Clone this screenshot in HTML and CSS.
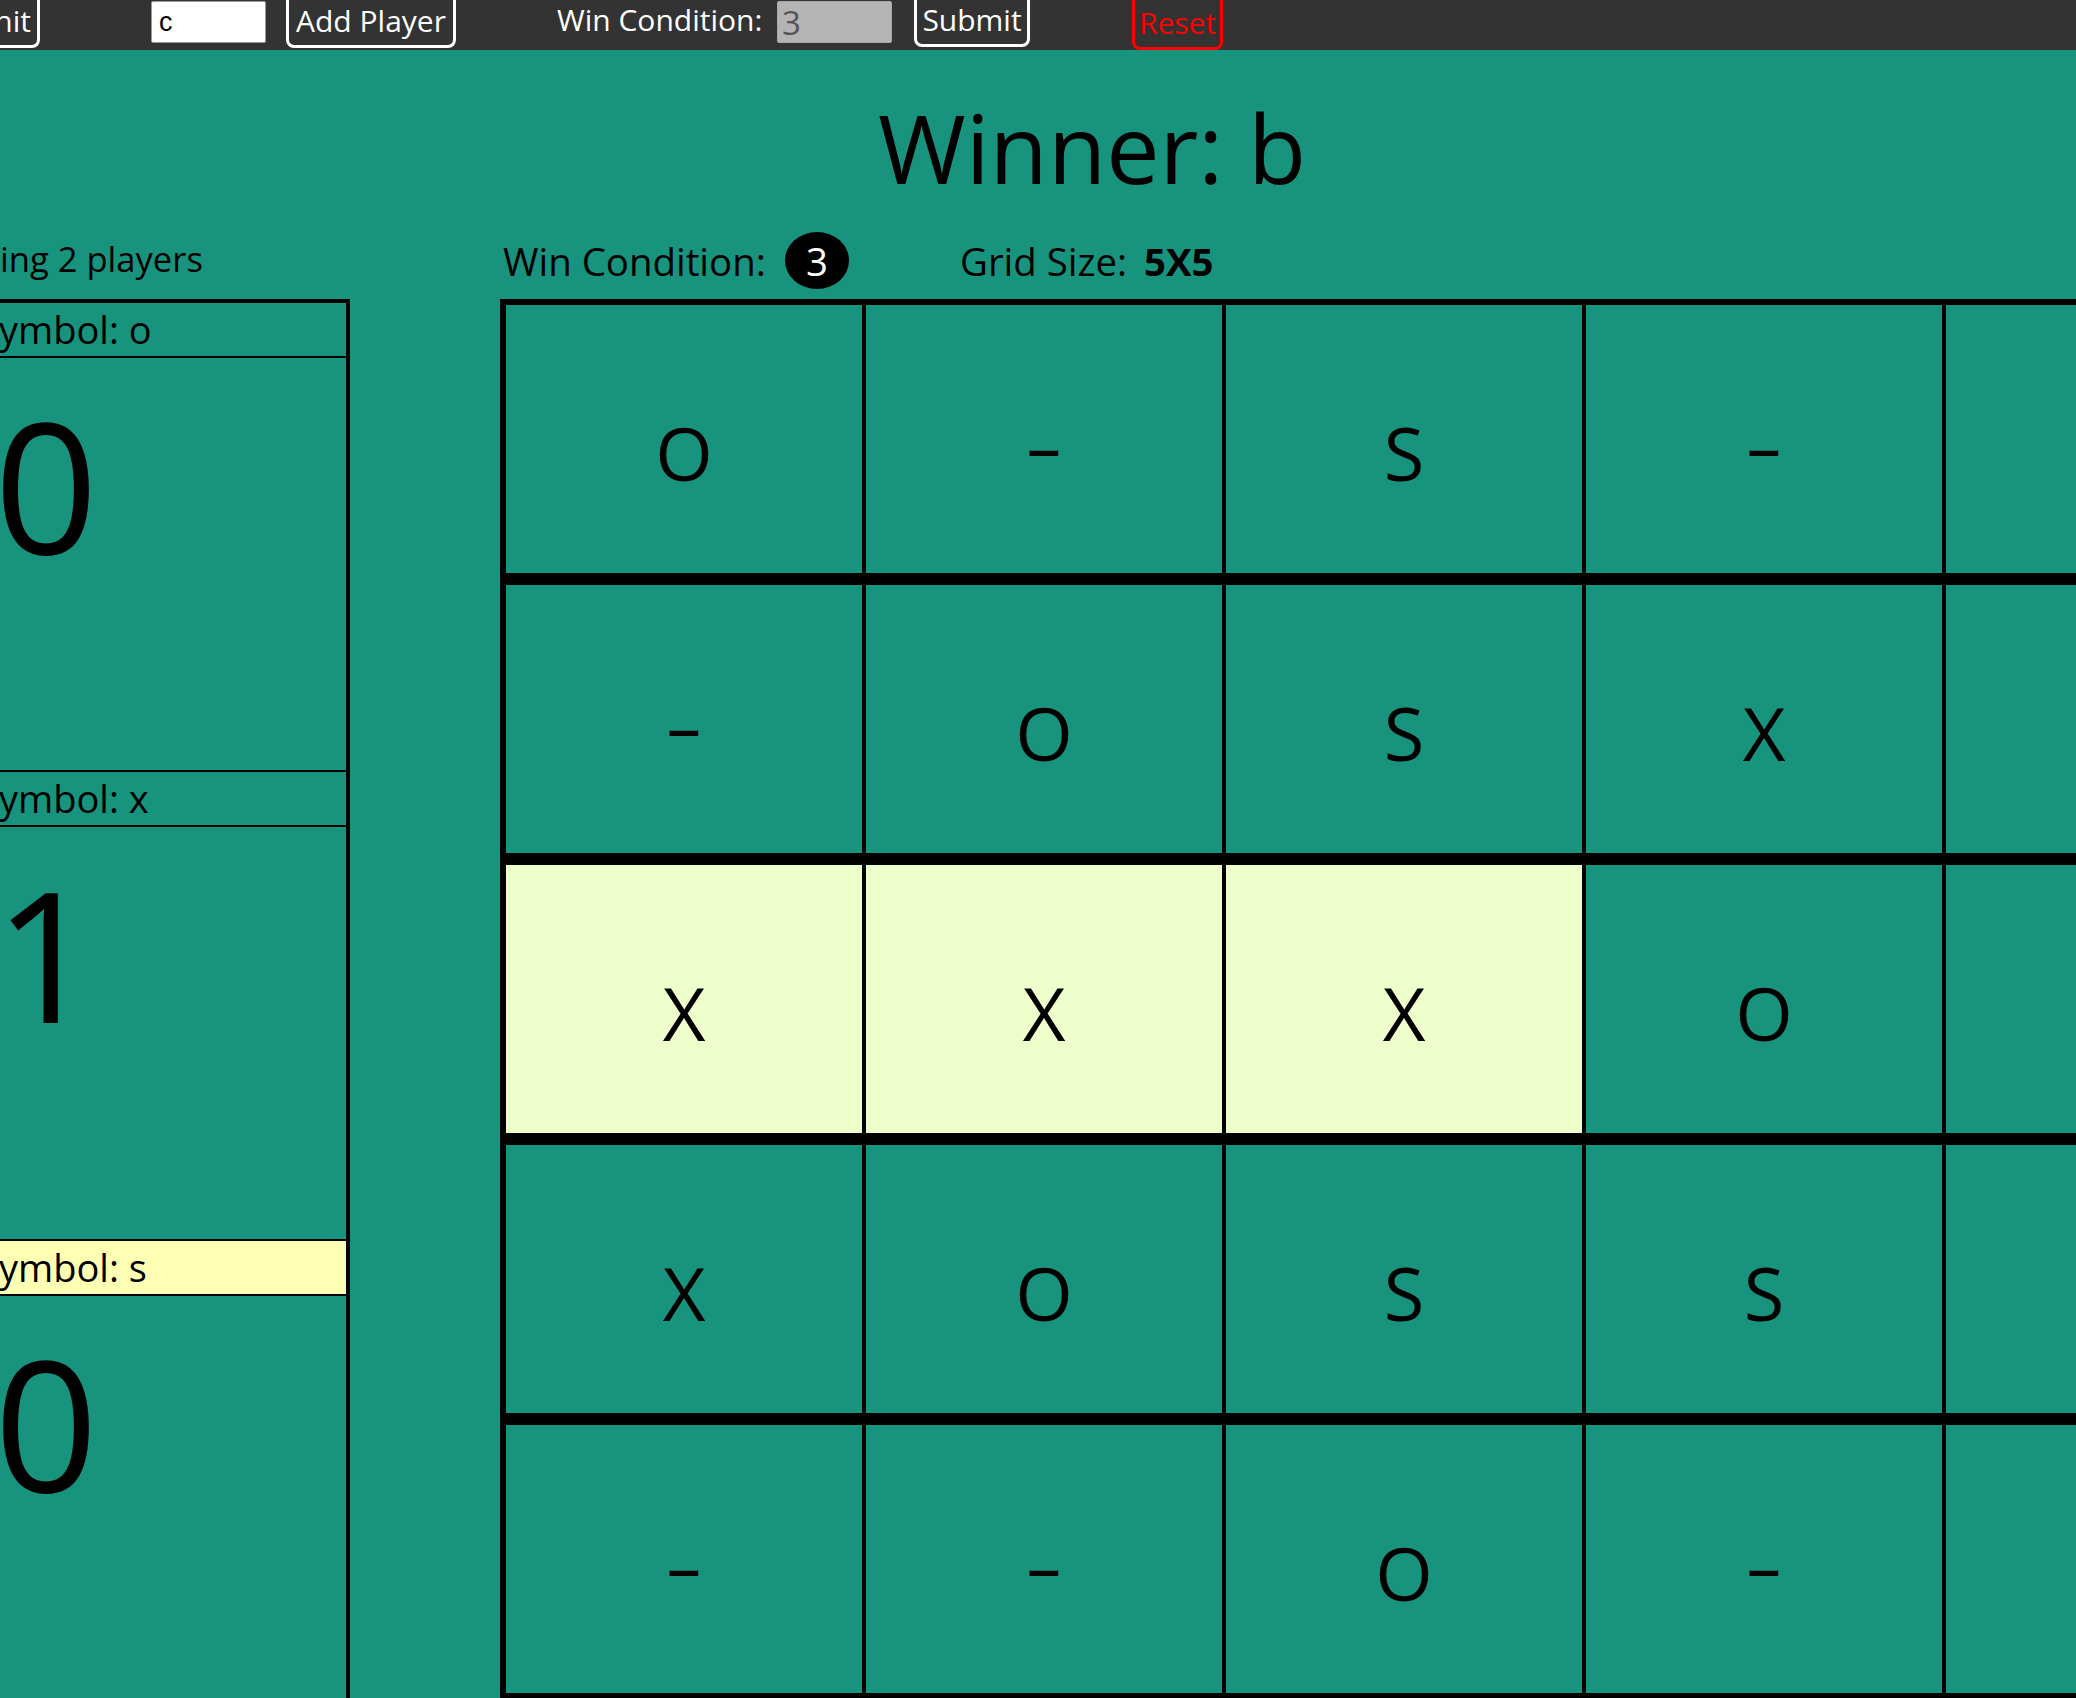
FILE: index.html
```html
<!DOCTYPE html>
<html lang="en">
<head>
<meta charset="utf-8">
<title>Tic Tac Toe</title>
<link rel="stylesheet" href="styles.css">
</head>
<body>
<div class="page">
  <header class="topbar">
    <button class="btn btn-cut">nit</button>
    <input class="name-input" type="text" value="c">
    <button class="btn btn-add">Add Player</button>
    <label class="bar-label">Win Condition:</label>
    <input class="win-input" type="text" value="3" disabled>
    <button class="btn btn-submit">Submit</button>
    <button class="btn btn-reset">Reset</button>
  </header>

  <h1 class="winner">Winner: b</h1>

  <main class="main">
    <aside class="side">
      <div class="side-title">ing 2 players</div>
      <div class="panel">
        <div class="player">
          <div class="player-head">ymbol: o</div>
          <div class="player-score">0</div>
        </div>
        <div class="player">
          <div class="player-head">ymbol: x</div>
          <div class="player-score">1</div>
        </div>
        <div class="player">
          <div class="player-head current">ymbol: s</div>
          <div class="player-score">0</div>
        </div>
      </div>
    </aside>

    <section class="board">
      <div class="info">
        <span class="info-label">Win Condition:</span>
        <span class="badge">3</span>
        <span class="info-grid">Grid Size:</span>
        <strong class="info-size">5X5</strong>
      </div>
      <div class="grid">
        <div class="cell">o</div>
        <div class="cell"><span class="dash">-</span></div>
        <div class="cell">s</div>
        <div class="cell"><span class="dash">-</span></div>
        <div class="cell"><span class="dash">-</span></div>

        <div class="cell"><span class="dash">-</span></div>
        <div class="cell">o</div>
        <div class="cell">s</div>
        <div class="cell">x</div>
        <div class="cell"><span class="dash">-</span></div>

        <div class="cell win">x</div>
        <div class="cell win">x</div>
        <div class="cell win">x</div>
        <div class="cell">o</div>
        <div class="cell"><span class="dash">-</span></div>

        <div class="cell">x</div>
        <div class="cell">o</div>
        <div class="cell">s</div>
        <div class="cell">s</div>
        <div class="cell"><span class="dash">-</span></div>

        <div class="cell"><span class="dash">-</span></div>
        <div class="cell"><span class="dash">-</span></div>
        <div class="cell">o</div>
        <div class="cell"><span class="dash">-</span></div>
        <div class="cell"><span class="dash">-</span></div>
      </div>
    </section>
  </main>
</div>
</body>
</html>
```

FILE: styles.css
```css
html, body {
  margin: 0;
  padding: 0;
  overflow: hidden;
}

body {
  background: #17937e;
  font-family: "Open Sans", "Noto Sans", sans-serif;
  color: #000;
}

.page {
  width: 2184px;
}

/* ---------- top bar ---------- */
.topbar {
  height: 50px;
  background: #333333;
  display: flex;
  align-items: flex-end;
}

.btn {
  box-sizing: border-box;
  flex: none;
  background: transparent;
  color: #fff;
  border: 3px solid #fff;
  border-radius: 8px;
  font-family: "Open Sans", "Noto Sans", sans-serif;
  font-size: 30px;
  line-height: 41px;
  padding: 6px 0 4px;
  text-align: center;
  margin-bottom: 2px;
}

.btn-cut {
  width: 70px;
  margin-left: -30px;
  text-align: right;
  padding-right: 6px;
}

.btn-add {
  width: 170px;
  margin-left: 20px;
}

.btn-submit {
  width: 116px;
  margin-left: 22px;
  margin-bottom: 3px;
}

.btn-reset {
  width: 91px;
  margin-left: 102px;
  margin-bottom: 0;
  border-color: #ff0000;
  color: #ff0000;
}

.name-input,
.win-input {
  box-sizing: border-box;
  flex: none;
  height: 42px;
  width: 115px;
  margin-bottom: 7px;
  border: 1px solid #9a9a9a;
  border-radius: 2px;
  padding: 0 6px;
  background: #fff;
  color: #000;
  font-family: "Liberation Sans", Arial, sans-serif;
  font-size: 27px;
}

.name-input {
  margin-left: 111px;
  padding-left: 7px;
}

.win-input {
  margin-left: 9px;
  background: #b4b4b4;
  border-color: #a8a8a8;
  color: #555;
  font-family: "Open Sans", "Noto Sans", sans-serif;
  font-size: 33px;
  padding-left: 4px;
}

.bar-label {
  flex: none;
  width: 211px;
  margin-left: 101px;
  margin-bottom: 10px;
  color: #fff;
  font-size: 30px;
  line-height: 40px;
  white-space: nowrap;
}

/* ---------- heading ---------- */
.winner {
  margin: 32px 0 0;
  font-size: 95px;
  font-weight: normal;
  line-height: 131px;
  text-align: center;
}

/* ---------- main ---------- */
.main {
  display: flex;
  align-items: flex-start;
}

.side {
  flex: none;
  width: 350px;
}

.side-title {
  margin: 23px 0 17px;
  font-size: 34.6px;
  line-height: 46px;
  white-space: nowrap;
}

.panel {
  box-sizing: border-box;
  width: 370px;
  margin-left: -20px;
  border: 4px solid #000;
  border-bottom: none;
}

.player + .player {
  border-top: 2px solid #000;
}

.player-head {
  height: 53px;
  line-height: 53px;
  font-size: 38px;
  padding-left: 15px;
  border-bottom: 2px solid #000;
  white-space: nowrap;
}

.player-head.current {
  background: #ffffb3;
}

.player-score {
  height: 412px;
  box-sizing: border-box;
  padding: 1px 0 0 10px;
  font-size: 182px;
  line-height: 248px;
}

.board {
  flex: none;
  margin-left: 150px;
}

.info {
  height: 57px;
  margin: 19px 0 10px;
  display: flex;
  align-items: center;
  font-size: 38.4px;
  white-space: nowrap;
}

.info-label {
  width: 262px;
  padding-left: 3px;
}

.badge {
  width: 64px;
  height: 57px;
  margin-left: 20px;
  border-radius: 50%;
  background: #000;
  color: #fff;
  display: flex;
  align-items: center;
  justify-content: center;
}

.info-grid {
  width: 163px;
  margin-left: 111px;
}

.info-size {
  margin-left: 21px;
  font-weight: bold;
}

.grid {
  display: grid;
  grid-template-columns: repeat(5, 356px);
  grid-auto-rows: 268px;
  column-gap: 4px;
  row-gap: 12px;
  padding: 6px;
  background: #000;
  width: max-content;
}

.cell {
  background: #17937e;
  display: flex;
  align-items: center;
  justify-content: center;
  box-sizing: border-box;
  padding-top: 26px;
  font-size: 74px;
  text-transform: uppercase;
}

.cell.win {
  background: #eeffcc;
}

.dash {
  display: inline-block;
  transform: translateY(-8px) scaleX(1.6);
}
```
